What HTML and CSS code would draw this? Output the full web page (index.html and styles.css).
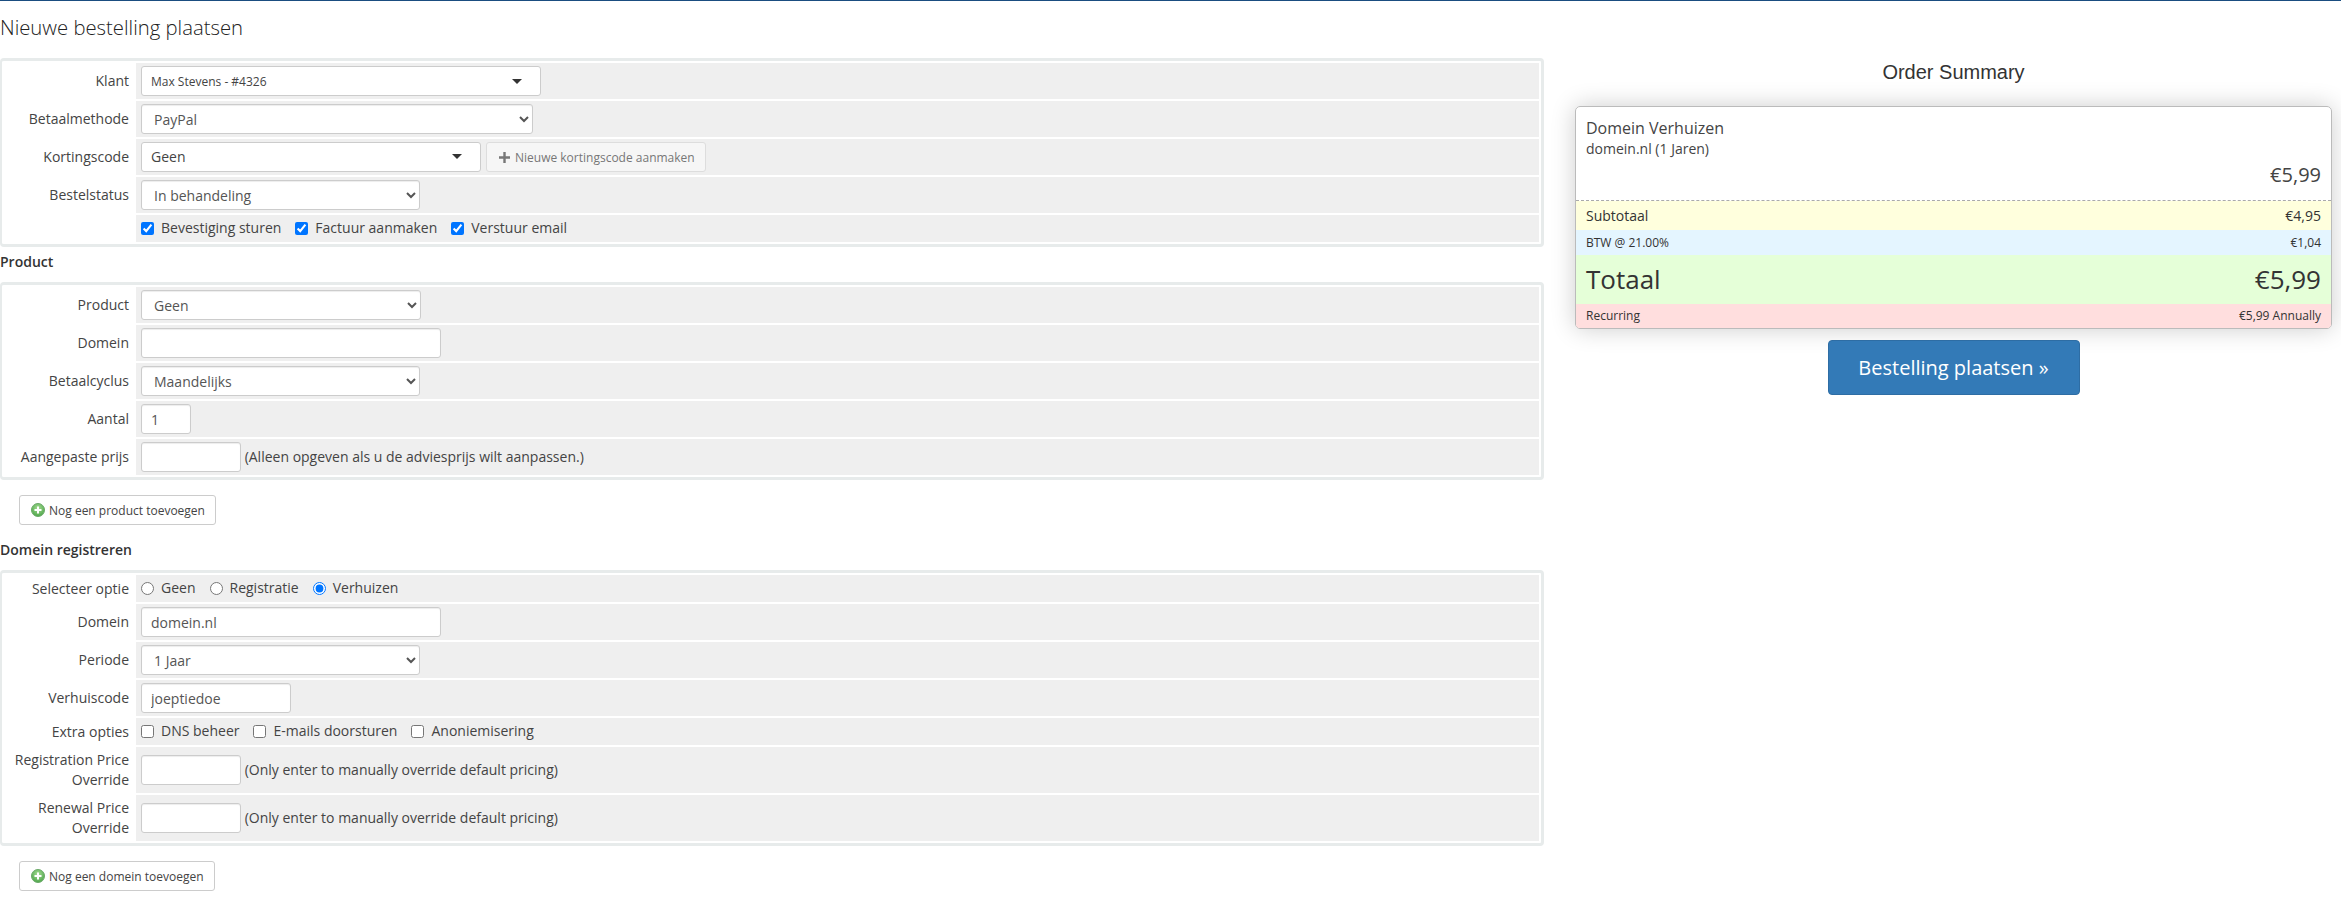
FILE: index.html
```html
<!DOCTYPE html>
<html lang="nl">
<head>
<meta charset="utf-8">
<title>Nieuwe bestelling plaatsen</title>
<link rel="stylesheet" href="styles.css">
</head>
<body>
<header class="page-title"><h1>Nieuwe bestelling plaatsen</h1></header>
<div class="layout">
<main class="main-col">
  <div class="panel">
    <table class="form">
      <tr><td class="lbl">Klant</td><td class="fld"><div class="s2 w400"><span>Max Stevens - #4326</span><i class="caret"></i></div></td></tr>
      <tr><td class="lbl">Betaalmethode</td><td class="fld"><select class="ctl w392"><option>PayPal</option></select></td></tr>
      <tr><td class="lbl">Kortingscode</td><td class="fld fld-flex"><div class="s2 s2-big w340"><span>Geen</span><i class="caret"></i></div><button class="btn-ghost"><svg class="plus" viewBox="0 0 11 11"><path d="M4.3 0h2.4v4.3H11v2.4H6.7V11H4.3V6.7H0V4.3h4.3z"/></svg>Nieuwe kortingscode aanmaken</button></td></tr>
      <tr><td class="lbl">Bestelstatus</td><td class="fld"><select class="ctl w279"><option>In behandeling</option></select></td></tr>
      <tr class="short"><td class="lbl"></td><td class="fld"><label class="chk"><input type="checkbox" checked>Bevestiging sturen</label><label class="chk"><input type="checkbox" checked>Factuur aanmaken</label><label class="chk"><input type="checkbox" checked>Verstuur email</label></td></tr>
    </table>
  </div>
  <h2 class="sec sec-first">Product</h2>
  <div class="panel">
    <table class="form">
      <tr><td class="lbl">Product</td><td class="fld"><select class="ctl w280"><option>Geen</option></select></td></tr>
      <tr><td class="lbl">Domein</td><td class="fld"><input class="ctl w300" type="text"></td></tr>
      <tr><td class="lbl">Betaalcyclus</td><td class="fld"><select class="ctl w279"><option>Maandelijks</option></select></td></tr>
      <tr><td class="lbl">Aantal</td><td class="fld"><input class="ctl w50" type="text" value="1"></td></tr>
      <tr><td class="lbl">Aangepaste prijs</td><td class="fld"><input class="ctl w100" type="text"> <span class="note">(Alleen opgeven als u de adviesprijs wilt aanpassen.)</span></td></tr>
    </table>
  </div>
  <div class="add-wrap"><button class="btn-add w197"><svg class="add-ico" viewBox="0 0 14 14"><defs><radialGradient id="g1" cx="50%" cy="35%" r="65%"><stop offset="0" stop-color="#a5dc93"/><stop offset="1" stop-color="#4ea64a"/></radialGradient></defs><circle cx="7" cy="7" r="6.5" fill="url(#g1)" stroke="#6aa968" stroke-width="1"/><path d="M6 3.5h2V6h2.5v2H8v2.5H6V8H3.5V6H6z" fill="#fff"/></svg>Nog een product toevoegen</button></div>
  <h2 class="sec">Domein registreren</h2>
  <div class="panel">
    <table class="form">
      <tr class="short"><td class="lbl">Selecteer optie</td><td class="fld"><label class="chk"><input type="radio" name="o">Geen</label><label class="chk"><input type="radio" name="o">Registratie</label><label class="chk"><input type="radio" name="o" checked>Verhuizen</label></td></tr>
      <tr><td class="lbl">Domein</td><td class="fld"><input class="ctl w300" type="text" value="domein.nl"></td></tr>
      <tr><td class="lbl">Periode</td><td class="fld"><select class="ctl w279"><option>1 Jaar</option></select></td></tr>
      <tr><td class="lbl">Verhuiscode</td><td class="fld"><input class="ctl w150" type="text" value="joeptiedoe"></td></tr>
      <tr class="short"><td class="lbl">Extra opties</td><td class="fld"><label class="chk"><input type="checkbox">DNS beheer</label><label class="chk"><input type="checkbox">E-mails doorsturen</label><label class="chk"><input type="checkbox">Anoniemisering</label></td></tr>
      <tr class="tall"><td class="lbl">Registration Price Override</td><td class="fld"><input class="ctl w100" type="text"> <span class="note">(Only enter to manually override default pricing)</span></td></tr>
      <tr class="tall"><td class="lbl">Renewal Price Override</td><td class="fld"><input class="ctl w100" type="text"> <span class="note">(Only enter to manually override default pricing)</span></td></tr>
    </table>
  </div>
  <div class="add-wrap"><button class="btn-add w196"><svg class="add-ico" viewBox="0 0 14 14"><defs><radialGradient id="g2" cx="50%" cy="35%" r="65%"><stop offset="0" stop-color="#a5dc93"/><stop offset="1" stop-color="#4ea64a"/></radialGradient></defs><circle cx="7" cy="7" r="6.5" fill="url(#g2)" stroke="#6aa968" stroke-width="1"/><path d="M6 3.5h2V6h2.5v2H8v2.5H6V8H3.5V6H6z" fill="#fff"/></svg>Nog een domein toevoegen</button></div>
</main>
<aside class="side-col">
  <h2 class="sum-title">Order Summary</h2>
  <div class="card">
    <div class="item">
      <div class="item-name">Domein Verhuizen</div>
      <div class="item-sub">domein.nl (1 Jaren)</div>
      <div class="item-price">€5,99</div>
    </div>
    <div class="row sub"><span>Subtotaal</span><span>€4,95</span></div>
    <div class="row tax"><span>BTW @ 21.00%</span><span>€1,04</span></div>
    <div class="row total"><span>Totaal</span><span>€5,99</span></div>
    <div class="row rec"><span>Recurring</span><span>€5,99 Annually</span></div>
  </div>
  <button class="btn-submit">Bestelling plaatsen »</button>
</aside>
</div>
</body>
</html>
```
FILE: styles.css
```css
* { box-sizing: border-box; }
html, body { margin: 0; padding: 0; }
body {
  background: #fff;
  color: #333;
  font-family: "Open Sans", sans-serif;
  font-size: 14px;
  line-height: 20px;
  border-top: 1px solid #1a4d80;
  overflow: hidden;
}
.page-title { height: 57px; padding-top: 13px; }
h1 {
  margin: 0;
  font-size: 20.3px;
  line-height: 26px;
  font-weight: 300;
  color: #222;
}
.layout { display: flex; align-items: flex-start; }
.main-col { width: 1544px; flex: none; }
.panel {
  border: 3px solid #e7ebeb;
  border-left-width: 2px;
  border-radius: 4px;
}
.form { width: 100%; border-collapse: separate; border-spacing: 2px; table-layout: fixed; }
.form td { padding: 0; }
.form tr { height: 36px; }
.form tr.short { height: 27px; }
.form tr.tall { height: 46px; }
.lbl {
  width: 130px;
  padding: 0 5px 0 0 !important;
  text-align: right;
  color: #444;
  font-size: 14px;
  line-height: 20px;
}
.fld { background: #efefef; padding: 0 0 0 5px !important; white-space: nowrap; }
.fld-flex > * { vertical-align: middle; }
.ctl {
  height: 30px;
  border: 1px solid #ccc;
  border-radius: 3px;
  background: #fff;
  color: #555;
  font-family: "Open Sans", sans-serif;
  font-size: 14px;
  padding: 0 9px;
  vertical-align: middle;
  box-shadow: inset 0 1px 1px rgba(0,0,0,.075);
}
select.ctl { padding: 0 8px; }
.w392 { width: 392px; }
.w279 { width: 279px; }
.w280 { width: 280px; }
.w300 { width: 300px; }
.w50 { width: 50px; }
.w100 { width: 100px; }
.w150 { width: 150px; }
.w400 { width: 400px; }
.w340 { width: 340px; }
.s2 {
  display: inline-flex;
  align-items: center;
  justify-content: space-between;
  height: 30px;
  padding: 2px 18px 0 9px;
  border: 1px solid #ccc;
  border-radius: 3px;
  background: #fff;
  color: #444;
  font-size: 12px;
  vertical-align: middle;
}
.s2-big { font-size: 14px; padding-top: 0; }
.caret {
  width: 0; height: 0;
  border-left: 5px solid transparent;
  border-right: 5px solid transparent;
  border-top: 5px solid #333;
  margin-top: -2px;
}
.btn-ghost {
  display: inline-flex;
  align-items: center;
  width: 220px;
  height: 30px;
  margin-left: 5px;
  padding: 0 0 0 12px;
  border: 1px solid #ddd;
  border-radius: 3px;
  background: #f6f6f6;
  color: #777;
  font-family: "Open Sans", sans-serif;
  font-size: 12px;
  white-space: nowrap;
}
.plus { width: 11px; height: 11px; fill: #777; margin-right: 5px; flex: none; }
.chk { display: inline-flex; align-items: center; margin-right: 14px; padding-top: 1px; color: #444; font-size: 14px; }
.chk input { margin: 0 7px 0 0; width: 13px; height: 13px; }
.note { color: #444; vertical-align: -1px; }
.sec {
  margin: 5px 0 10px;
  font-size: 14px;
  line-height: 20px;
  font-weight: 600;
  color: #333;
}
.sec-first { margin-top: 5px; }
.add-wrap { margin: 15px 0 15px 19px; height: 30px; }
.btn-add {
  display: flex;
  align-items: center;
  height: 30px;
  padding: 0 0 0 11px;
  border: 1px solid #ccc;
  border-radius: 3px;
  background: #fff;
  color: #444;
  font-family: "Open Sans", sans-serif;
  font-size: 12px;
  white-space: nowrap;
}
.w197 { width: 197px; }
.w196 { width: 196px; }
.add-ico { width: 14px; height: 14px; margin-right: 4px; flex: none; }
.side-col { width: 757px; margin-left: 31px; flex: none; display: flex; flex-direction: column; align-items: center; }
.sum-title {
  margin: 0;
  height: 48px;
  padding-top: 3px;
  font-family: "Liberation Sans", sans-serif;
  font-size: 20px;
  line-height: 22px;
  font-weight: 400;
  color: #333;
}
.card {
  width: 100%;
  border: 1px solid #bbb;
  border-radius: 5px;
  overflow: hidden;
  box-shadow: 0 0 25px rgba(0,0,0,.2);
  height: 223px;
}
.item { height: 94px; padding: 10px 10px 0; border-bottom: 1px dashed #aaa; }
.item-name { font-size: 16px; line-height: 22px; color: #444; }
.item-sub { font-size: 14px; line-height: 20px; color: #444; }
.item-price { font-size: 20px; line-height: 28px; text-align: right; margin-top: 2px; color: #444; }
.row { display: flex; justify-content: space-between; align-items: center; padding: 0 10px; }
.sub { height: 29px; background: #ffffdd; font-size: 14px; }
.tax { height: 25px; background: #e4f5ff; font-size: 12px; }
.total { height: 49px; background: #e5ffd8; font-size: 26px; padding-bottom: 2px; color: #333; }
.rec { height: 24px; background: #ffdede; font-size: 12px; }
.btn-submit {
  width: 252px;
  height: 55px;
  margin-top: 11px;
  border: 1px solid #2e6da4;
  border-radius: 4px;
  background: #337ab7;
  color: #fff;
  font-family: "Open Sans", sans-serif;
  font-size: 20px;
}
```
